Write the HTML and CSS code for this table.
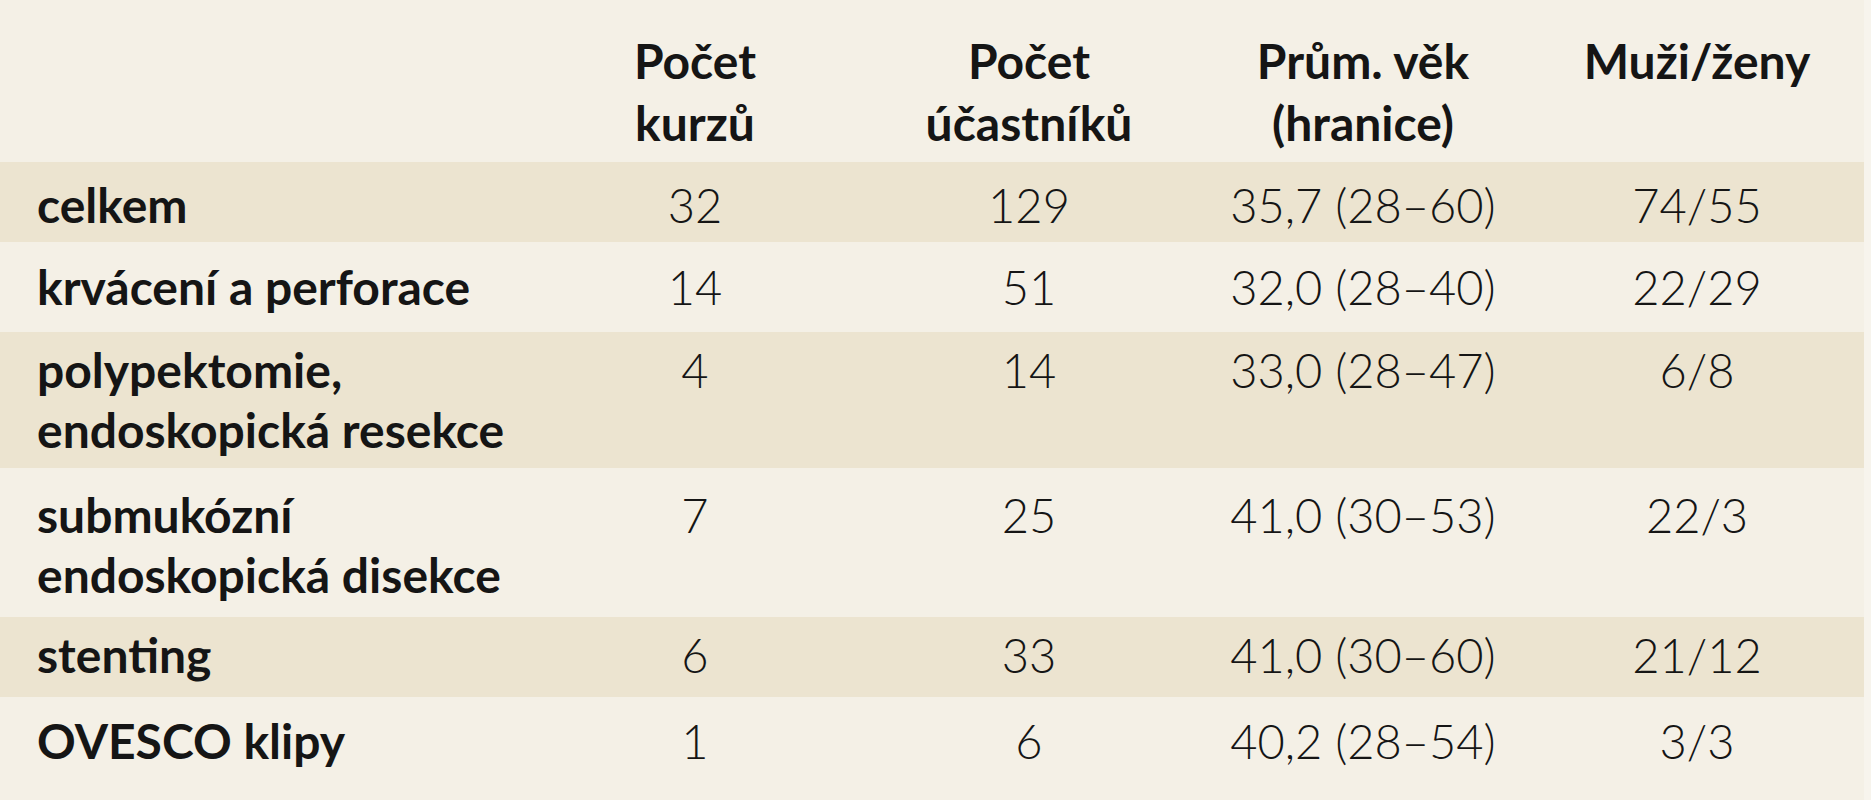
FILE: index.html
```
<!DOCTYPE html>
<html lang="cs">
<head>
<meta charset="utf-8">
<title>Kurzy</title>
<link rel="stylesheet" href="styles.css">
</head>
<body>
<table class="stats">
  <colgroup>
    <col class="c-label">
    <col class="c-num">
    <col class="c-num">
    <col class="c-num">
    <col class="c-num">
  </colgroup>
  <thead>
    <tr class="head">
      <th></th>
      <th>Počet<br>kurzů</th>
      <th>Počet<br>účastníků</th>
      <th>Prům. věk<br>(hranice)</th>
      <th class="top">Muži/ženy</th>
    </tr>
  </thead>
  <tbody>
    <tr class="dark row-a"><td class="lab">celkem</td><td>32</td><td>129</td><td>35,7 (28–60)</td><td>74/55</td></tr>
    <tr class="light row-b"><td class="lab">krvácení a perforace</td><td>14</td><td>51</td><td>32,0 (28–40)</td><td>22/29</td></tr>
    <tr class="dark row-c"><td class="lab">polypektomie,<br>endoskopická resekce</td><td>4</td><td>14</td><td>33,0 (28–47)</td><td>6/8</td></tr>
    <tr class="light row-d"><td class="lab">submukózní<br>endoskopická disekce</td><td>7</td><td>25</td><td>41,0 (30–53)</td><td>22/3</td></tr>
    <tr class="dark row-e"><td class="lab">stenting</td><td>6</td><td>33</td><td>41,0 (30–60)</td><td>21/12</td></tr>
    <tr class="light row-f"><td class="lab">OVESCO klipy</td><td>1</td><td>6</td><td>40,2 (28–54)</td><td>3/3</td></tr>
  </tbody>
</table>
</body>
</html>
```
FILE: styles.css
```
html, body {
  margin: 0;
  padding: 0;
  background: #f7f4ed;
}
body {
  font-family: Lato, "Noto Sans", sans-serif;
  color: #151515;
}
.stats {
  width: 1864px;
  border-collapse: collapse;
  table-layout: fixed;
}
.c-label { width: 528px; }
.c-num { width: 334px; }

.head th {
  background: #f4f0e6;
  height: 162px;
  box-sizing: border-box;
  padding: 0 0 8px 0;
  vertical-align: bottom;
  font-weight: 700;
  font-size: 48px;
  line-height: 62px;
  text-align: center;
}
.head th.top {
  padding-bottom: 70px;
}

.stats td {
  font-size: 47px;
  line-height: 60px;
  text-align: center;
  vertical-align: top;
  font-weight: 300;
  padding: 0;
}
.stats td.lab {
  text-align: left;
  font-weight: 700;
  font-size: 48px;
  padding-left: 37px;
}
.row-a td { padding-top: 13px; padding-bottom: 7px; }
.row-b td { padding-top: 15px; padding-bottom: 15px; }
.row-c td { padding-top: 8px; padding-bottom: 8px; }
.row-d td { padding-top: 17px; padding-bottom: 12px; }
.row-e td { padding-top: 8px; padding-bottom: 12px; }
.row-f td { padding-top: 14px; padding-bottom: 40px; }

.dark { background: #ece4d0; }
.light { background: #f4f0e6; }
```
